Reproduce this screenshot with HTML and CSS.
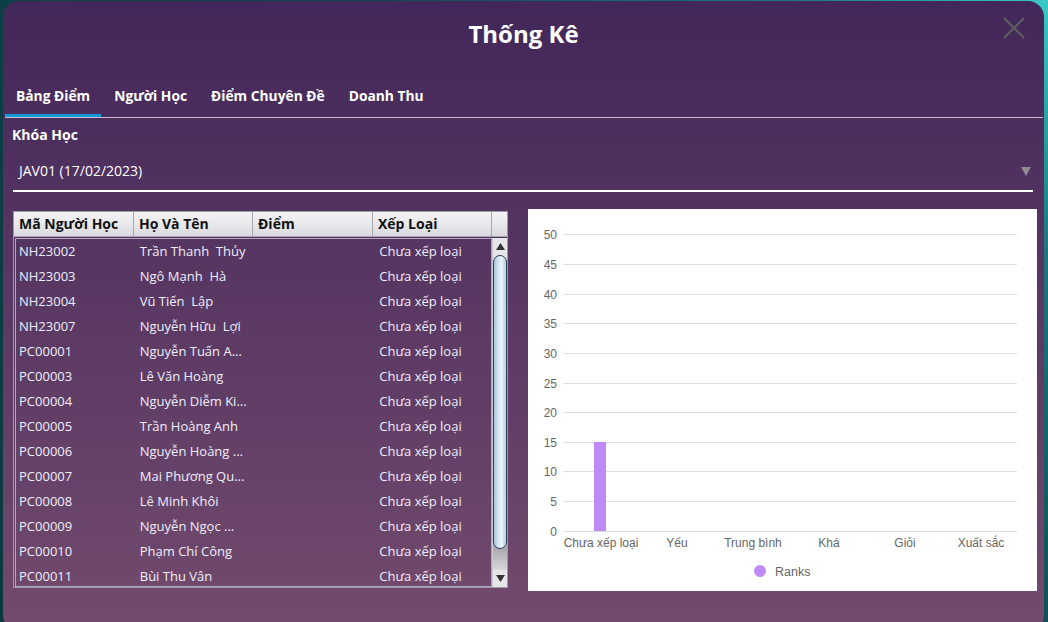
FILE: index.html
```html
<!DOCTYPE html>
<html lang="vi">
<head>
<meta charset="utf-8">
<title>Thống Kê</title>
<link rel="stylesheet" href="styles.css">
</head>
<body>
<div class="dialog">
  <div class="header">
    <h1 class="title">Thống Kê</h1>
    <svg class="close" width="24" height="24" viewBox="0 0 24 24"><path d="M2 2 L22 22 M22 2 L2 22" stroke="#5e5e62" stroke-width="2.2" fill="none"/></svg>
  </div>
  <div class="tabs">
    <div class="tab active">Bảng Điểm</div>
    <div class="tab">Người Học</div>
    <div class="tab">Điểm Chuyên Đề</div>
    <div class="tab">Doanh Thu</div>
  </div>
  <div class="content">
    <div class="label">Khóa Học</div>
    <div class="combo">
      <span>JAV01 (17/02/2023)</span>
      <svg class="arrow" width="10" height="9" viewBox="0 0 10 9"><path d="M0 0 L10 0 L5 9 Z" fill="#8c8c90"/></svg>
    </div>
    <div class="main">
      <div class="table">
        <div class="thead">
          <div class="th c1">Mã Người Học</div>
          <div class="th c2">Họ Và Tên</div>
          <div class="th c3">Điểm</div>
          <div class="th c4">Xếp Loại</div>
          <div class="th c5"></div>
        </div>
        <div class="tbody-wrap">
          <div class="tbody">
            <div class="tr"><div class="td c1">NH23002</div><div class="td c2">Trần Thanh&nbsp; Thủy</div><div class="td c3"></div><div class="td c4">Chưa xếp loại</div></div>
            <div class="tr"><div class="td c1">NH23003</div><div class="td c2">Ngô Mạnh&nbsp; Hà</div><div class="td c3"></div><div class="td c4">Chưa xếp loại</div></div>
            <div class="tr"><div class="td c1">NH23004</div><div class="td c2">Vũ Tiến&nbsp; Lập</div><div class="td c3"></div><div class="td c4">Chưa xếp loại</div></div>
            <div class="tr"><div class="td c1">NH23007</div><div class="td c2">Nguyễn Hữu&nbsp; Lợi</div><div class="td c3"></div><div class="td c4">Chưa xếp loại</div></div>
            <div class="tr"><div class="td c1">PC00001</div><div class="td c2">Nguyễn Tuấn A...</div><div class="td c3"></div><div class="td c4">Chưa xếp loại</div></div>
            <div class="tr"><div class="td c1">PC00003</div><div class="td c2">Lê Văn Hoàng</div><div class="td c3"></div><div class="td c4">Chưa xếp loại</div></div>
            <div class="tr"><div class="td c1">PC00004</div><div class="td c2">Nguyễn Diễm Ki...</div><div class="td c3"></div><div class="td c4">Chưa xếp loại</div></div>
            <div class="tr"><div class="td c1">PC00005</div><div class="td c2">Trần Hoàng Anh</div><div class="td c3"></div><div class="td c4">Chưa xếp loại</div></div>
            <div class="tr"><div class="td c1">PC00006</div><div class="td c2">Nguyễn Hoàng ...</div><div class="td c3"></div><div class="td c4">Chưa xếp loại</div></div>
            <div class="tr"><div class="td c1">PC00007</div><div class="td c2">Mai Phương Qu...</div><div class="td c3"></div><div class="td c4">Chưa xếp loại</div></div>
            <div class="tr"><div class="td c1">PC00008</div><div class="td c2">Lê Minh Khôi</div><div class="td c3"></div><div class="td c4">Chưa xếp loại</div></div>
            <div class="tr"><div class="td c1">PC00009</div><div class="td c2">Nguyễn Ngọc ...</div><div class="td c3"></div><div class="td c4">Chưa xếp loại</div></div>
            <div class="tr"><div class="td c1">PC00010</div><div class="td c2">Phạm Chí Công</div><div class="td c3"></div><div class="td c4">Chưa xếp loại</div></div>
            <div class="tr"><div class="td c1">PC00011</div><div class="td c2">Bùi Thu Vân</div><div class="td c3"></div><div class="td c4">Chưa xếp loại</div></div>
          </div>
          <div class="scrollbar">
            <div class="sb-btn up"><svg width="9" height="7" viewBox="0 0 9 7"><path d="M4.5 0 L9 7 L0 7 Z" fill="#333"/></svg></div>
            <div class="sb-track"><div class="sb-thumb"></div></div>
            <div class="sb-btn down"><svg width="9" height="7" viewBox="0 0 9 7"><path d="M0 0 L9 0 L4.5 7 Z" fill="#333"/></svg></div>
          </div>
        </div>
      </div>
      <div class="chart">
        <svg width="509" height="382" viewBox="0 0 509 382" class="chart-svg">
          <g stroke="#e0e0e0" stroke-width="1">
            <line x1="35" y1="25.5" x2="489" y2="25.5"/>
            <line x1="35" y1="55.5" x2="489" y2="55.5"/>
            <line x1="35" y1="85.5" x2="489" y2="85.5"/>
            <line x1="35" y1="114.5" x2="489" y2="114.5"/>
            <line x1="35" y1="144.5" x2="489" y2="144.5"/>
            <line x1="35" y1="174.5" x2="489" y2="174.5"/>
            <line x1="35" y1="203.5" x2="489" y2="203.5"/>
            <line x1="35" y1="233.5" x2="489" y2="233.5"/>
            <line x1="35" y1="262.5" x2="489" y2="262.5"/>
            <line x1="35" y1="292.5" x2="489" y2="292.5"/>
            <line x1="35" y1="322.5" x2="489" y2="322.5"/>
          </g>
          <g class="ylab" text-anchor="end">
            <text x="29" y="30">50</text>
            <text x="29" y="60">45</text>
            <text x="29" y="90">40</text>
            <text x="29" y="119">35</text>
            <text x="29" y="149">30</text>
            <text x="29" y="179">25</text>
            <text x="29" y="208">20</text>
            <text x="29" y="238">15</text>
            <text x="29" y="267">10</text>
            <text x="29" y="297">5</text>
            <text x="29" y="327">0</text>
          </g>
          <rect x="66" y="233" width="12" height="89" fill="#bf8af5"/>
          <g class="xlab" text-anchor="middle">
            <text x="73" y="338">Chưa xếp loại</text>
            <text x="149" y="338">Yếu</text>
            <text x="225" y="338">Trung bình</text>
            <text x="301" y="338">Khá</text>
            <text x="377" y="338">Giỏi</text>
            <text x="453" y="338">Xuất sắc</text>
          </g>
          <circle cx="232" cy="362" r="6" fill="#bf8af5"/>
          <text class="legend" x="247" y="367">Ranks</text>
        </svg>
      </div>
    </div>
  </div>
</div>
</body>
</html>
```

FILE: styles.css
```css
* { box-sizing: border-box; }
html, body { margin: 0; padding: 0; }
body {
  width: 1048px;
  height: 622px;
  overflow: hidden;
  background: radial-gradient(circle at 100% 0%, #3cc8c8 0%, #1a7a80 20%, #0e4a50 55%, #0a3a40 100%);
  font-family: "Open Sans", "Noto Sans", sans-serif;
}
.dialog {
  margin: 1px 4px 0 3px;
  height: 630px;
  border-radius: 16px;
  background: linear-gradient(180deg, #42275a 0%, #734b6d 100%);
  display: flex;
  flex-direction: column;
  position: relative;
  color: #fff;
}
.header {
  height: 76px;
  display: flex;
  justify-content: center;
  padding-top: 16px;
}
.title {
  margin: 0;
  font-size: 24px;
  font-weight: 700;
  line-height: 34px;
  color: #fff;
}
.close {
  position: absolute;
  top: 15px;
  right: 18px;
}
.tabs {
  display: flex;
  margin: 0 1px 0 2px;
  border-bottom: 1px solid #c9bfcc;
  height: 41px;
}
.tab {
  font-size: 13.8px;
  font-weight: 700;
  line-height: 38px;
  padding: 0 11px;
  margin-right: 2px;
  border-bottom: 3px solid transparent;
}
.tab.active { border-bottom-color: #1499d8; }
.content {
  padding: 7px 7px 0 10px;
  display: flex;
  flex-direction: column;
}
.label {
  font-size: 14px;
  font-weight: 700;
  line-height: 20px;
  margin-left: -1px;
}
.combo {
  margin-top: 16px;
  height: 31px;
  border-bottom: 2px solid #fff;
  display: flex;
  justify-content: space-between;
  align-items: flex-start;
  font-size: 14px;
  margin-right: 4px;
  padding-left: 6px;
  line-height: 20px;
}
.combo .arrow {
  margin-top: 6px;
  margin-right: 2px;
}
.main {
  display: flex;
  margin-top: 17px;
  gap: 20px;
  align-items: flex-start;
}
.table {
  width: 495px;
  height: 377px;
  flex-shrink: 0;
  margin-top: 2px;
  border: 1px solid #9c98a8;
  display: flex;
  flex-direction: column;
  overflow: hidden;
}
.thead {
  display: flex;
  height: 25px;
  background: linear-gradient(180deg, #f4f4f6 0%, #e6e6ea 60%, #d8d8de 100%);
  border-bottom: 1px solid #a8a4b0;
  flex-shrink: 0;
}
.th {
  font-size: 14px;
  font-weight: 700;
  color: #111;
  line-height: 23px;
  padding-left: 5px;
  border-right: 1px solid #a8a8b0;
  white-space: nowrap;
  overflow: hidden;
}
.c1 { width: 120px; }
.c2 { width: 119px; }
.c3 { width: 120px; }
.c4 { width: 119px; }
.th.c5 { width: 15px; border-right: 0; padding: 0; }
.tbody-wrap {
  display: flex;
  flex: 1;
  min-height: 0;
  padding-top: 1px;
}
.tbody {
  width: 477px;
  margin-left: 1px;
  border: 1px solid #b4a4c0;
  overflow: hidden;
}
.tr {
  display: flex;
  height: 25px;
}
.td {
  font-size: 13px;
  color: #eeeefa;
  line-height: 24px;
  padding-left: 3px;
  white-space: nowrap;
  overflow: hidden;
}
.td.c1 { width: 120px; }
.td.c2 { width: 119px; padding-left: 4px; }
.td.c3 { width: 120px; }
.td.c4 { width: 117px; padding-left: 5px; }
.scrollbar {
  width: 15px;
  display: flex;
  flex-direction: column;
  background: #dedee4;
  border-left: 1px solid #c8c8d0;
}
.sb-btn {
  height: 17px;
  display: flex;
  align-items: center;
  justify-content: center;
  background: #e6e6ea;
  flex-shrink: 0;
}
.sb-track {
  flex: 1;
  display: flex;
  flex-direction: column;
  background: linear-gradient(180deg, #e4e4e8 0%, #e4e4e8 88%, #a8a8ac 93%, #d8d8da 100%);
}
.sb-thumb {
  height: 294px;
  border: 1px solid #2a3e5a;
  border-radius: 7px;
  background: linear-gradient(90deg, #a8c4dc 0%, #d8e8f4 40%, #eef4fa 60%, #b8d0e4 100%);
}
.chart {
  width: 509px;
  height: 382px;
  flex-shrink: 0;
  background: #fff;
}
.chart-svg { display: block; }
.chart-svg text {
  font-family: "Liberation Sans", Arial, sans-serif;
  font-size: 12px;
  fill: #666;
}
.chart-svg .legend { font-size: 12.5px; fill: #666; }
```
